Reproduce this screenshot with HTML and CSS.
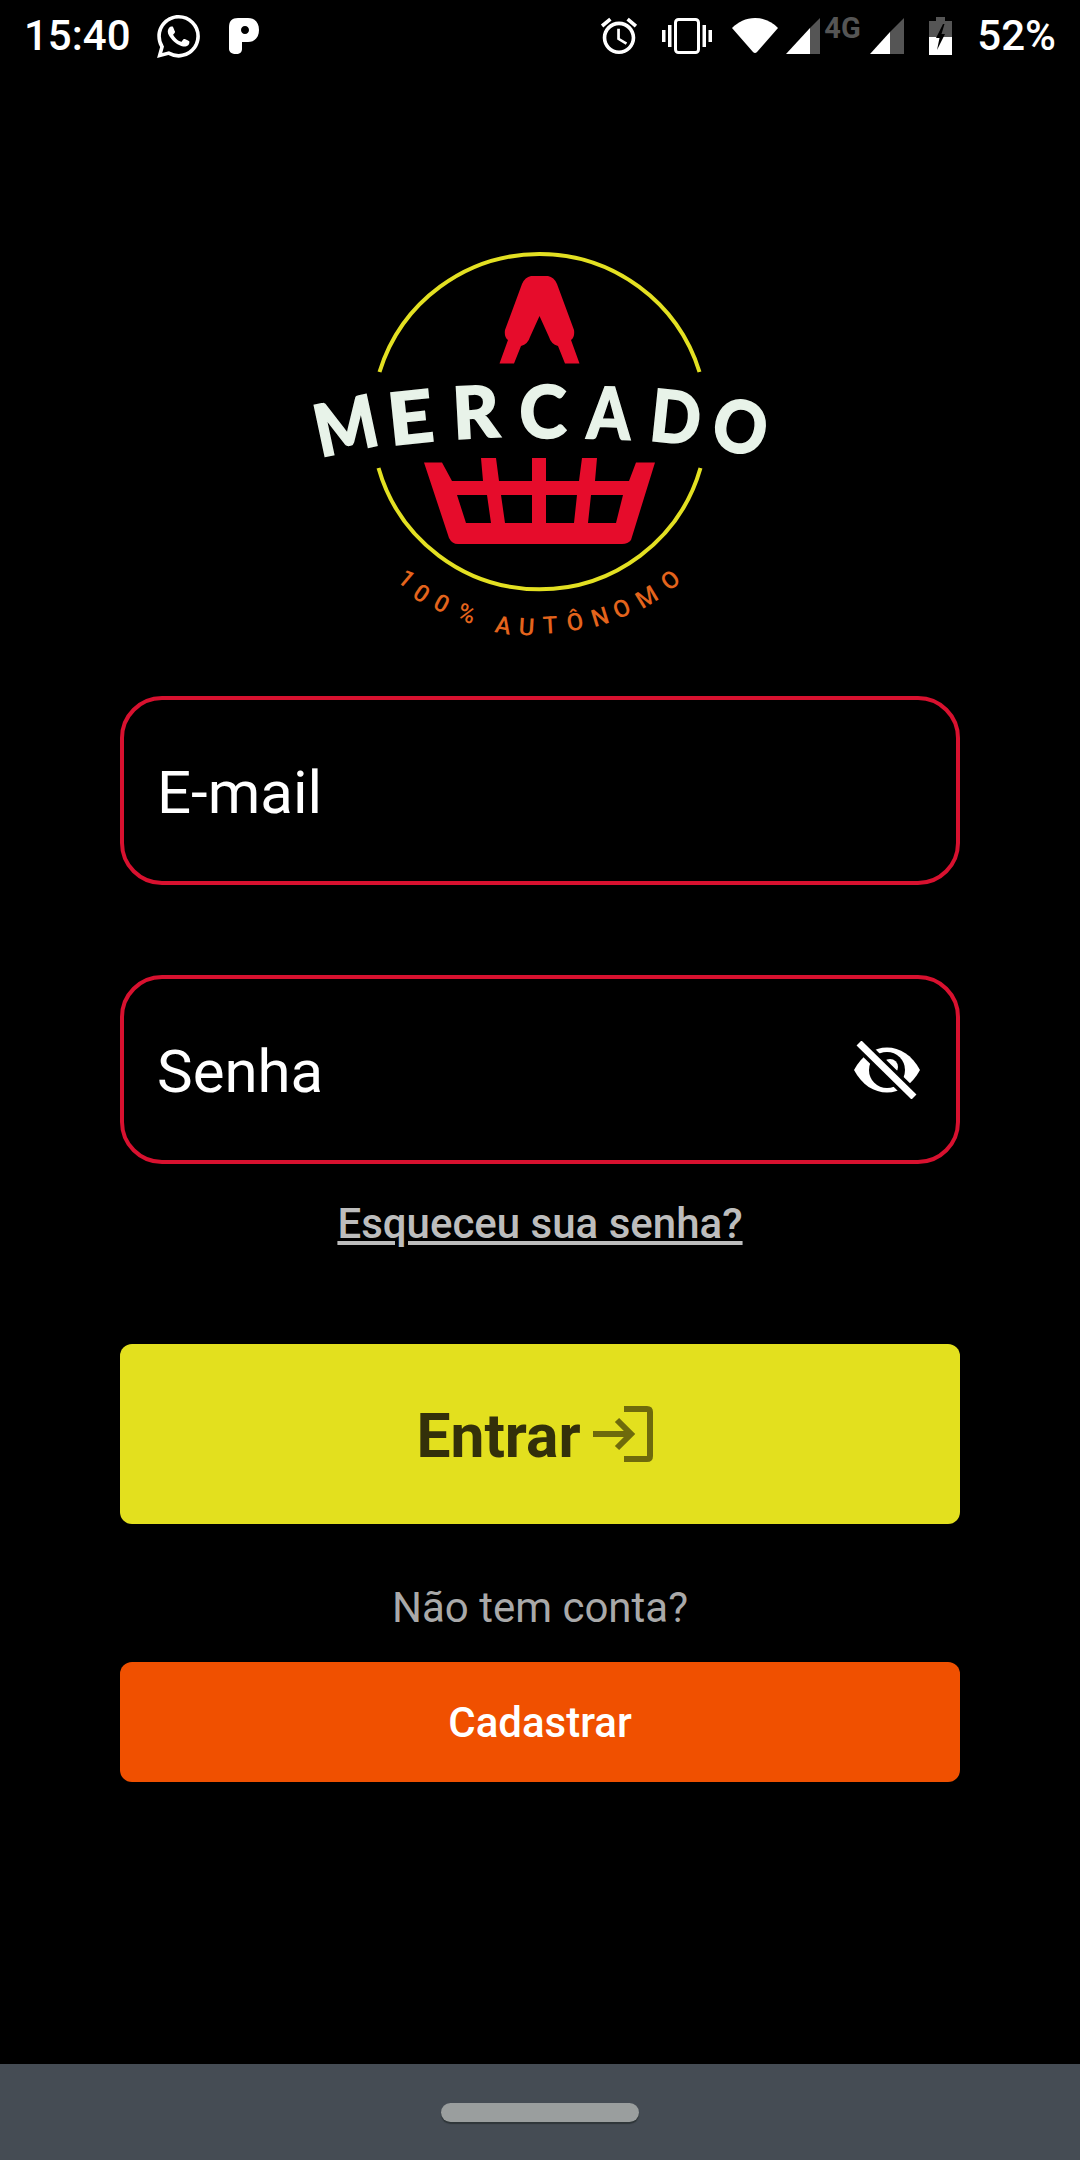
FILE: index.html
```html
<!DOCTYPE html>
<html lang="pt-BR">
<head>
    <meta charset="UTF-8">
    <meta name="viewport" content="width=device-width, initial-scale=1.0">
    <title>Mercado Autônomo</title>
    <link rel="stylesheet" href="styles.css">
</head>
<body>
    <div class="screen">
        <div class="status-bar">
            <div class="status-group">
                <span class="status-text time">15:40</span>
                <svg class="icon-whatsapp" viewBox="0 0 24 24"><path fill="#fff" d="M17.472 14.382c-.297-.149-1.758-.867-2.03-.967-.273-.099-.471-.148-.67.15-.197.297-.767.966-.94 1.164-.173.199-.347.223-.644.075-.297-.15-1.255-.463-2.39-1.475-.883-.788-1.48-1.761-1.653-2.059-.173-.297-.018-.458.13-.606.134-.133.298-.347.446-.52.149-.174.198-.298.298-.497.099-.198.05-.371-.025-.52-.075-.149-.669-1.612-.916-2.207-.242-.579-.487-.5-.669-.51-.173-.008-.371-.01-.57-.01-.198 0-.52.074-.792.372-.272.297-1.04 1.016-1.04 2.479 0 1.462 1.065 2.875 1.213 3.074.149.198 2.096 3.2 5.077 4.487.709.306 1.262.489 1.694.625.712.227 1.36.195 1.871.118.571-.085 1.758-.719 2.006-1.413.248-.694.248-1.289.173-1.413-.074-.124-.272-.198-.57-.347m-5.421 7.403h-.004a9.87 9.87 0 01-5.031-1.378l-.361-.214-3.741.982.998-3.648-.235-.374a9.86 9.86 0 01-1.51-5.26c.001-5.45 4.436-9.884 9.888-9.884 2.64 0 5.122 1.03 6.988 2.898a9.825 9.825 0 012.893 6.994c-.003 5.45-4.437 9.884-9.885 9.884m8.413-18.297A11.815 11.815 0 0012.05 0C5.495 0 .16 5.335.157 11.892c0 2.096.547 4.142 1.588 5.945L.057 24l6.305-1.654a11.882 11.882 0 005.683 1.448h.005c6.554 0 11.89-5.335 11.893-11.893a11.821 11.821 0 00-3.48-8.413z"/></svg>
                <svg class="icon-p" viewBox="0 0 30 36"><path fill="#fff" fill-rule="evenodd" d="M9 0H19C26 0 30 5 30 12S26 24 19 24H13V31C13 34 11 36 7 36S0 34 0 31V9C0 3 3 0 9 0ZM16 8C13.500 8 12 9.800 12 12S13.500 16 16 16 20 14.200 20 12 18.500 8 16 8Z"/></svg>
            </div>
            <div class="status-group">
                <svg class="icon-alarm" viewBox="2 1.500 20 21"><path fill="#fff" d="M22 5.720l-4.600-3.860-1.290 1.530 4.600 3.860L22 5.720zM7.880 3.390L6.600 1.860 2 5.710l1.290 1.530 4.590-3.850zM12.500 8H11v6l4.750 2.850.75-1.230-4-2.370V8zM12 4c-4.970 0-9 4.030-9 9s4.030 9 9 9 9-4.030 9-9-4.030-9-9-9zm0 16c-3.870 0-7-3.130-7-7s3.130-7 7-7 7 3.130 7 7-3.130 7-7 7z"/></svg>
                <svg class="icon-vibrate" viewBox="0 0 50 36"><rect x="13.500" y="1.500" width="23" height="33" rx="3" fill="none" stroke="#fff" stroke-width="3"/><rect x="0" y="12" width="3.500" height="12" fill="#fff"/><rect x="6" y="7" width="3.500" height="22" fill="#fff"/><rect x="40.500" y="7" width="3.500" height="22" fill="#fff"/><rect x="46.500" y="12" width="3.500" height="12" fill="#fff"/></svg>
                <svg class="icon-wifi" viewBox="0 0 46 36"><path fill="#fff" d="M0 10C6 4 14 0 23 0S40 4 46 10L25 34Q23 36 21 34Z"/></svg>
                <svg class="icon-signal" viewBox="0 0 34 36"><path fill="#555" d="M34 0V36H24V10Z"/><path fill="#fff" d="M24 10V36H0Z"/></svg>
                <span class="network">4G</span>
                <svg class="icon-signal second" viewBox="0 0 34 36"><path fill="#555" d="M34 0V36H20V14Z"/><path fill="#fff" d="M20 14V36H0Z"/></svg>
                <svg class="icon-battery" viewBox="0 0 23 38"><path fill="#555" d="M7 0H16V4H23V20H0V4H7Z"/><path fill="#fff" d="M0 20H23V38H0Z"/><path fill="#000" d="M14 7L7 21H10.500L8 33L16 17H12.500L15.500 7Z"/></svg>
                <span class="status-text battery-level">52%</span>
            </div>
        </div>

        <div class="logo">
            <svg class="logo-svg" viewBox="-30 0 540 420">
                <path class="logo-ring" d="M79.500 132A167.500 167.500 0 0 1 399.500 132"/>
                <path class="logo-ring" d="M78.500 228A167.500 167.500 0 0 0 400.500 228"/>
                <!-- roof A -->
                <path class="logo-red" d="M231 36H248Q254 37 257 44L274 90Q275 97 271 100L279.500 123.500H265L258 106Q251 104 249 97L239.500 76L230 97Q228 104 221 106L214 123.500H199.500L208 100Q204 97 205 90L222 44Q225 37 231 36Z"/>
                <!-- basket -->
                <path class="logo-red" fill-rule="evenodd" d="M124 222.500H142L152 241H183L181 218H196L199 241H232V218H246V241H279L282 218H297L295 241H329L336 222.500H355L331 300Q328 304 322 304H158Q152 304 149 298ZM157 255L166 283H191L187 255ZM201 255L205 283H232V255ZM246 255V283H274L277 255ZM291 255L288 283H316L323 255Z"/>
                <g class="logo-word">
                    <text transform="translate(51 211) rotate(-12) scale(.920 1)">M</text>
                    <text transform="translate(113 203) rotate(-6) scale(1.100 1)">E</text>
                    <text transform="translate(177 198) rotate(-3)">R</text>
                    <text transform="translate(243 198)">C</text>
                    <text transform="translate(308 199) rotate(2) scale(.860 1)">A</text>
                    <text transform="translate(373 203) rotate(6) scale(.920 1)">D</text>
                    <text transform="translate(435 212) rotate(12) scale(.920 1)">O</text>
                </g>
                <g class="logo-tagline">
                    <text y="8.500" transform="translate(106.700 338.300) rotate(40)">1</text>
                    <text y="8.500" transform="translate(121.700 353.300) rotate(34)">0</text>
                    <text y="8.500" transform="translate(141.700 363.300) rotate(28)">0</text>
                    <text y="8.500" transform="translate(166.700 373.300) rotate(21)">%</text>
                    <text y="8.500" transform="translate(203.300 385) rotate(10)">A</text>
                    <text y="8.500" transform="translate(226.700 386.700) rotate(3.500)">U</text>
                    <text y="8.500" transform="translate(250 385) rotate(-3)">T</text>
                    <text y="8.500" transform="translate(275 381.700) rotate(-10)">Ô</text>
                    <text y="8.500" transform="translate(300 376.700) rotate(-17)">N</text>
                    <text y="8.500" transform="translate(321.700 368.300) rotate(-24)">O</text>
                    <text y="8.500" transform="translate(346.700 356.700) rotate(-31)">M</text>
                    <text y="8.500" transform="translate(370 340) rotate(-39)">O</text>
                </g>
            </svg>
        </div>

        <div class="form">
            <div class="field"><span>E-mail</span></div>
            <div class="field field-password">
                <span>Senha</span>
                <svg class="icon-eye" viewBox="0 0 66 58">
                    <path fill="#fff" fill-rule="evenodd" d="M0 29C8 14 20 6.500 33 6.500S58 14 66 29C58 44 46 51.500 33 51.500S8 44 0 29Z"/>
                    <circle cx="33" cy="29" r="18" fill="#000"/>
                    <circle cx="36" cy="26" r="8" fill="#fff"/>
                    <path d="M5 2L60 56" stroke="#000" stroke-width="14"/>
                    <path d="M5 2L60 56" stroke="#fff" stroke-width="7"/>
                </svg>
            </div>
            <a class="forgot-link" href="#">Esqueceu sua senha?</a>
            <div class="btn btn-login">
                <span>Entrar</span>
                <svg class="icon-login" viewBox="0 0 60 56"><path fill="none" stroke="#6e6a0c" stroke-width="6" d="M31 3H54Q57 3 57 6V50Q57 53 54 53H31M0 28H38M24 14L38 28L24 42"/></svg>
            </div>
            <div class="no-account">Não tem conta?</div>
            <div class="btn btn-register">Cadastrar</div>
        </div>

        <div class="nav-bar">
            <div class="nav-pill"></div>
        </div>
    </div>
</body>
</html>
```

FILE: styles.css
```css
* {
    box-sizing: border-box;
}
body {
    margin: 0;
    background-color: #000;
    font-family: Roboto, 'Liberation Sans', sans-serif;
    color: #fff;
}
.screen {
    width: 1080px;
    height: 2160px;
    display: flex;
    flex-direction: column;
    overflow: hidden;
}

/* status bar */
.status-bar {
    height: 72px;
    padding: 0 24px;
    display: flex;
    justify-content: space-between;
    align-items: center;
}
.status-group {
    display: flex;
    align-items: center;
}
.status-text {
    font-size: 42px;
    font-weight: 500;
    line-height: 48px;
}
.icon-whatsapp {
    width: 43px;
    height: 43px;
    margin-left: 26px;
}
.icon-p {
    width: 30px;
    height: 36px;
    margin-left: 29px;
}
.icon-alarm {
    width: 38px;
    height: 38px;
}
.icon-vibrate {
    width: 50px;
    height: 36px;
    margin-left: 24px;
}
.icon-wifi {
    width: 46px;
    height: 36px;
    margin-left: 20px;
}
.icon-signal {
    width: 34px;
    height: 36px;
    margin-left: 8px;
}
.icon-signal.second {
    margin-left: 6px;
}
.network {
    width: 40px;
    margin: -16px 0 0 4px;
    font-size: 29px;
    font-weight: 700;
    line-height: 26px;
    color: #555;
}
.icon-battery {
    width: 23px;
    height: 38px;
    margin-left: 25px;
}
.battery-level {
    margin-left: 25px;
}

/* logo */
.logo {
    margin-top: 168px;
    height: 420px;
    padding-left: 270px;
}
.logo-svg {
    display: block;
    width: 540px;
    height: 420px;
}
.logo-ring {
    fill: none;
    stroke: #e3e022;
    stroke-width: 4;
}
.logo-red {
    fill: #e60c2b;
}
.logo-word text {
    font-family: Lato, sans-serif;
    font-size: 72px;
    font-weight: 900;
    text-anchor: middle;
    fill: #e8f3e9;
    stroke: #e8f3e9;
    stroke-width: 1.500;
}
.logo-tagline text {
    font-family: Roboto, sans-serif;
    font-size: 24px;
    font-weight: 500;
    text-anchor: middle;
    fill: #e4641c;
}

/* form */
.form {
    margin-top: 36px;
    padding: 0 120px;
    display: flex;
    flex-direction: column;
}
.field {
    height: 189px;
    padding: 0 33px;
    border: 4px solid #d8112f;
    border-radius: 42px;
    display: flex;
    align-items: center;
    justify-content: space-between;
    font-size: 60px;
}
.field span {
    padding-top: 3px;
}
.field-password {
    margin-top: 90px;
    padding-right: 36px;
}
.icon-eye {
    width: 66px;
    height: 58px;
}
.forgot-link {
    margin-top: 36px;
    text-align: center;
    font-size: 42px;
    line-height: 48px;
    font-weight: 500;
    color: #bdbdbd;
}
.btn {
    display: flex;
    align-items: center;
    justify-content: center;
    border-radius: 12px;
    font-weight: 700;
}
.btn-login {
    height: 180px;
    margin-top: 96px;
    background-color: #e3e01e;
    color: #33300a;
    font-size: 60.500px;
}
.btn-login span {
    padding-top: 4px;
}
.icon-login {
    width: 60px;
    height: 56px;
    margin: 0 11px 0 12px;
}
.no-account {
    margin-top: 60px;
    text-align: center;
    font-size: 42px;
    line-height: 48px;
    color: #a9a9a9;
}
.btn-register {
    height: 120px;
    margin-top: 30px;
    background-color: #f05000;
    font-size: 42px;
    font-weight: 500;
}

/* navigation bar */
.nav-bar {
    height: 96px;
    margin-top: auto;
    background-color: #454c54;
    display: flex;
    align-items: center;
    justify-content: center;
}
.nav-pill {
    width: 198px;
    height: 19px;
    border-radius: 10px;
    background-color: #9a9e9e;
    box-shadow: 0 2px 1px #2f3639;
}
```
